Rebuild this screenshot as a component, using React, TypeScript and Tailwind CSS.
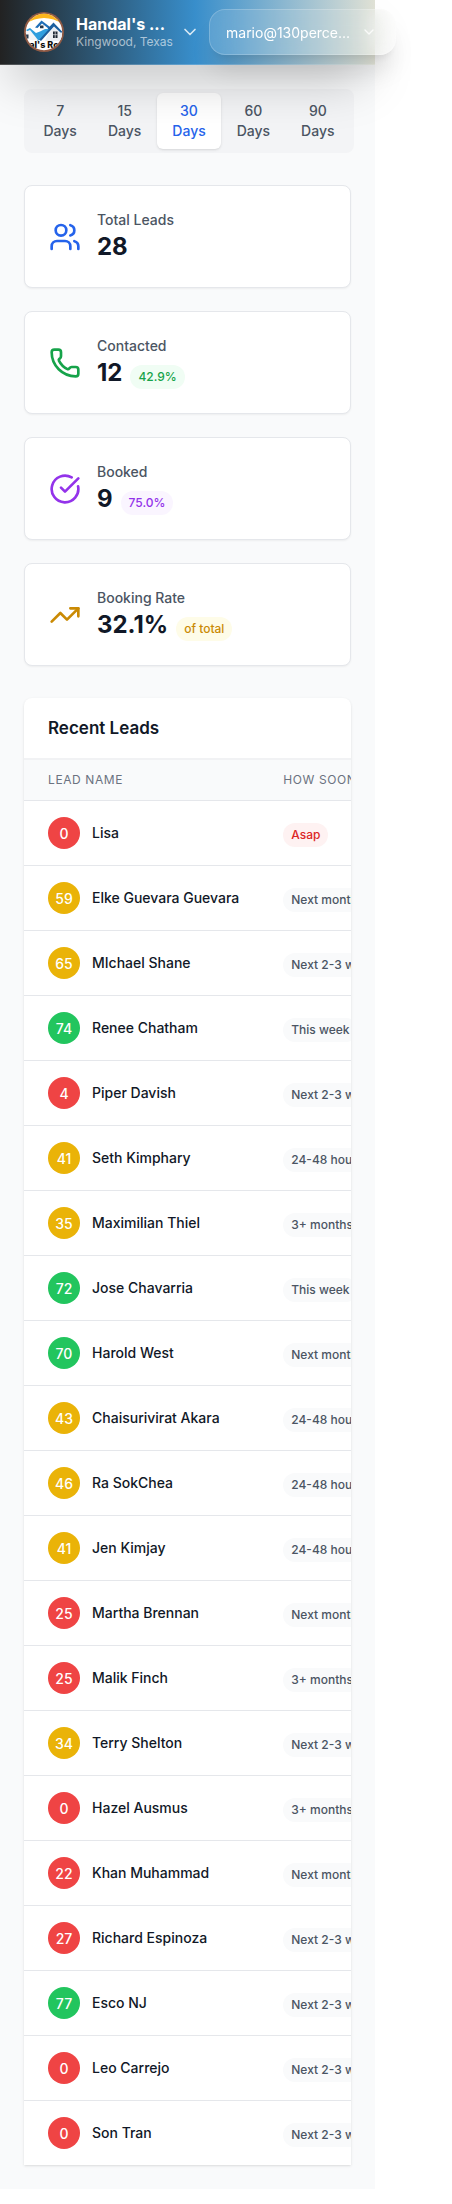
import { ChevronDown, CircleCheckBig, Phone, TrendingUp, Users } from "lucide-react";
import type { LucideIcon } from "lucide-react";

type Stat = {
  label: string;
  value: string;
  note?: string;
  icon: LucideIcon;
  iconClass: string;
  noteClass?: string;
};

const stats: Stat[] = [
  { label: "Total Leads", value: "28", icon: Users, iconClass: "text-[#2563eb]" },
  { label: "Contacted", value: "12", note: "42.9%", icon: Phone, iconClass: "text-[#16a34a]", noteClass: "bg-[#f0fdf4] text-[#16a34a]" },
  { label: "Booked", value: "9", note: "75.0%", icon: CircleCheckBig, iconClass: "text-[#9333ea]", noteClass: "bg-[#faf5ff] text-[#9333ea]" },
  { label: "Booking Rate", value: "32.1%", note: "of total", icon: TrendingUp, iconClass: "text-[#ca8a04]", noteClass: "bg-[#fefce8] text-[#ca8a04]" },
];

const leads: [number, string, string][] = [
  [0, "Lisa", "Asap"],
  [59, "Elke Guevara Guevara", "Next month"],
  [65, "MIchael Shane", "Next 2-3 weeks"],
  [74, "Renee Chatham", "This week"],
  [4, "Piper Davish", "Next 2-3 weeks"],
  [41, "Seth Kimphary", "24-48 hours"],
  [35, "Maximilian Thiel", "3+ months"],
  [72, "Jose Chavarria", "This week"],
  [70, "Harold West", "Next month"],
  [43, "Chaisurivirat Akara", "24-48 hours"],
  [46, "Ra SokChea", "24-48 hours"],
  [41, "Jen Kimjay", "24-48 hours"],
  [25, "Martha Brennan", "Next month"],
  [25, "Malik Finch", "3+ months"],
  [34, "Terry Shelton", "Next 2-3 weeks"],
  [0, "Hazel Ausmus", "3+ months"],
  [22, "Khan Muhammad", "Next month"],
  [27, "Richard Espinoza", "Next 2-3 weeks"],
  [77, "Esco NJ", "Next 2-3 weeks"],
  [0, "Leo Carrejo", "Next 2-3 weeks"],
  [0, "Son Tran", "Next 2-3 weeks"],
];

const periods = [7, 15, 30, 60, 90];

function scoreColor(score: number) {
  if (score >= 70) return "bg-[#22c55e]";
  if (score >= 30) return "bg-[#eab308]";
  return "bg-[#ef4444]";
}

function Logo() {
  return (
    <svg viewBox="0 0 40 40" className="size-10 shrink-0" role="img" aria-label="Logo">
      <defs>
        <clipPath id="logo-disc">
          <circle cx="20" cy="20" r="18.2" />
        </clipPath>
      </defs>
      <circle cx="20" cy="20" r="20" fill="#8f5a45" />
      <g clipPath="url(#logo-disc)">
        <rect width="40" height="40" fill="#fff" />
        <path d="M0 13Q20 -1 40 13V0H0Z" fill="#fbb51c" />
        <path d="M13 15L18 10.500L24 16L21 20L13 19Z" fill="#fff" />
        <path d="M24 22L31 14L38 20V29H21Z" fill="#eceff3" />
        <path d="M11 15.500L17.500 8.500L28 16.500L25 17L18 11.500L13.500 16Z" fill="#1f6fb8" />
        <path d="M16 13.500h3.500v2.800H16z" fill="#26384a" />
        <path d="M14 27L29.500 10.500L39 20.500L36.500 20.500L30 14.500L17 29Z" fill="#1c5f9e" />
        <path d="M2 18L6 16L12 21L16 19.500L21 17L25 17L14 29Z" fill="#2f9ede" />
        <path d="M1 20L6 18L14 28H6Z" fill="#f3f5f7" />
        <path d="M29 19.500h4.500v6.500H29z" fill="#1d2733" />
        <path d="M31.200 19.500v6.500M29 22.700h4.500" stroke="#fff" strokeWidth=".6" />
        <path d="M2 22.500h2.500v4H2z" fill="#26384a" />
        <text x="20" y="36" textAnchor="middle" fontSize="9" fontWeight="800" fill="#101010" fontFamily="Inter, sans-serif">al's Ro</text>
      </g>
    </svg>
  );
}

function Header() {
  return (
    <header className="relative z-10 flex h-[65px] items-center border-b border-white/20 bg-[linear-gradient(90deg,#222222_0%,#388ecb_52%,#e0e1d5_100%)] pl-6 shadow-[0_25px_50px_-12px_rgba(0,0,0,0.25)]">
      <button type="button" className="flex shrink-0 items-center text-left">
        <Logo />
        <span className="ml-3 block w-24">
          <span className="block text-[16px] leading-5 font-bold whitespace-nowrap text-white">Handal's ...</span>
          <span className="block text-[12px] leading-4 whitespace-nowrap text-white/60">Kingwood, Texas</span>
        </span>
        <ChevronDown className="ml-2 size-5 text-white/80" />
      </button>
      <button
        type="button"
        className="ml-[9px] flex h-[46px] w-[187px] shrink-0 items-center justify-between rounded-2xl border border-white/20 bg-white/10 pr-[18px] pl-4 text-[14px] text-white shadow-xl backdrop-blur-md"
      >
        mario@130perce...
        <ChevronDown className="size-4 text-white/80" />
      </button>
    </header>
  );
}

export default function App() {
  return (
    <div className="min-h-screen overflow-hidden bg-white font-['Inter',sans-serif]">
      <div className="w-full max-w-[375px] bg-[#f9fafb]">
        <Header />
        <main className="px-6 pt-6 pb-6">
          <div className="-mr-[3px] flex rounded-lg bg-[#f3f4f6] p-1">
            {periods.map((days) => (
              <button
                key={days}
                type="button"
                aria-pressed={days === 30}
                className={
                  days === 30
                    ? "flex-1 rounded-md bg-white py-2 text-[14px] leading-5 font-medium text-[#2563eb] shadow-sm"
                    : "flex-1 rounded-md py-2 text-[14px] leading-5 font-medium text-[#4b5563]"
                }
              >
                {days}
                <br />
                Days
              </button>
            ))}
          </div>

          <section className="mt-8 grid gap-[23px]">
            {stats.map(({ label, value, note, icon: Icon, iconClass, noteClass }) => (
              <div key={label} className="flex items-center rounded-lg border border-[#e5e7eb] bg-white p-6 shadow-xs">
                <Icon className={`size-8 shrink-0 ${iconClass}`} />
                <div className="ml-4">
                  <p className="text-[14px] leading-5 font-medium text-[#4b5563]">{label}</p>
                  <div className="flex items-baseline">
                    <p className="text-[24px] leading-[33px] font-bold text-[#111827]">{value}</p>
                    {note && (
                      <span className={`ml-2 rounded-full px-2 py-1 text-[12px] leading-4 font-medium ${noteClass}`}>{note}</span>
                    )}
                  </div>
                </div>
              </div>
            ))}
          </section>

          <section className="mt-8 overflow-hidden rounded-t-lg bg-white shadow-sm">
            <h2 className="border-b-2 border-[#f1f2f4] px-6 py-4 text-[17px] leading-7 font-semibold text-[#111827]">Recent Leads</h2>
            <div className="overflow-hidden">
              <table className="w-max border-collapse text-left whitespace-nowrap">
                <thead>
                  <tr className="border-b border-[#e5e7eb] bg-[#f9fafb] text-[12px] leading-4 tracking-wider text-[#6b7280]">
                    <th scope="col" className="px-6 py-3 font-normal">LEAD NAME</th>
                    <th scope="col" className="px-6 py-3 font-normal">HOW SOON</th>
                  </tr>
                </thead>
                <tbody className="divide-y divide-[#e5e7eb]">
                  {leads.map(([score, name, soon]) => (
                    <tr key={name}>
                      <td className="py-4 pr-5 pl-6">
                        <div className="flex items-center">
                          <span className={`flex size-8 items-center justify-center rounded-full text-[14px] font-medium text-white ${scoreColor(score)}`}>
                            {score}
                          </span>
                          <span className="ml-3 text-[14px] leading-5 font-medium text-[#111827]">{name}</span>
                        </div>
                      </td>
                      <td className="px-6 pt-[18px] pb-4">
                        <span
                          className={
                            soon === "Asap"
                              ? "inline-block rounded-full bg-[#fef2f2] px-2 py-1 text-[12px] leading-4 font-medium text-[#dc2626]"
                              : "inline-block rounded-full bg-[#f9fafb] px-2 py-1 text-[12px] leading-4 font-medium text-[#4b5563]"
                          }
                        >
                          {soon}
                        </span>
                      </td>
                    </tr>
                  ))}
                </tbody>
              </table>
            </div>
          </section>
        </main>
      </div>
    </div>
  );
}
